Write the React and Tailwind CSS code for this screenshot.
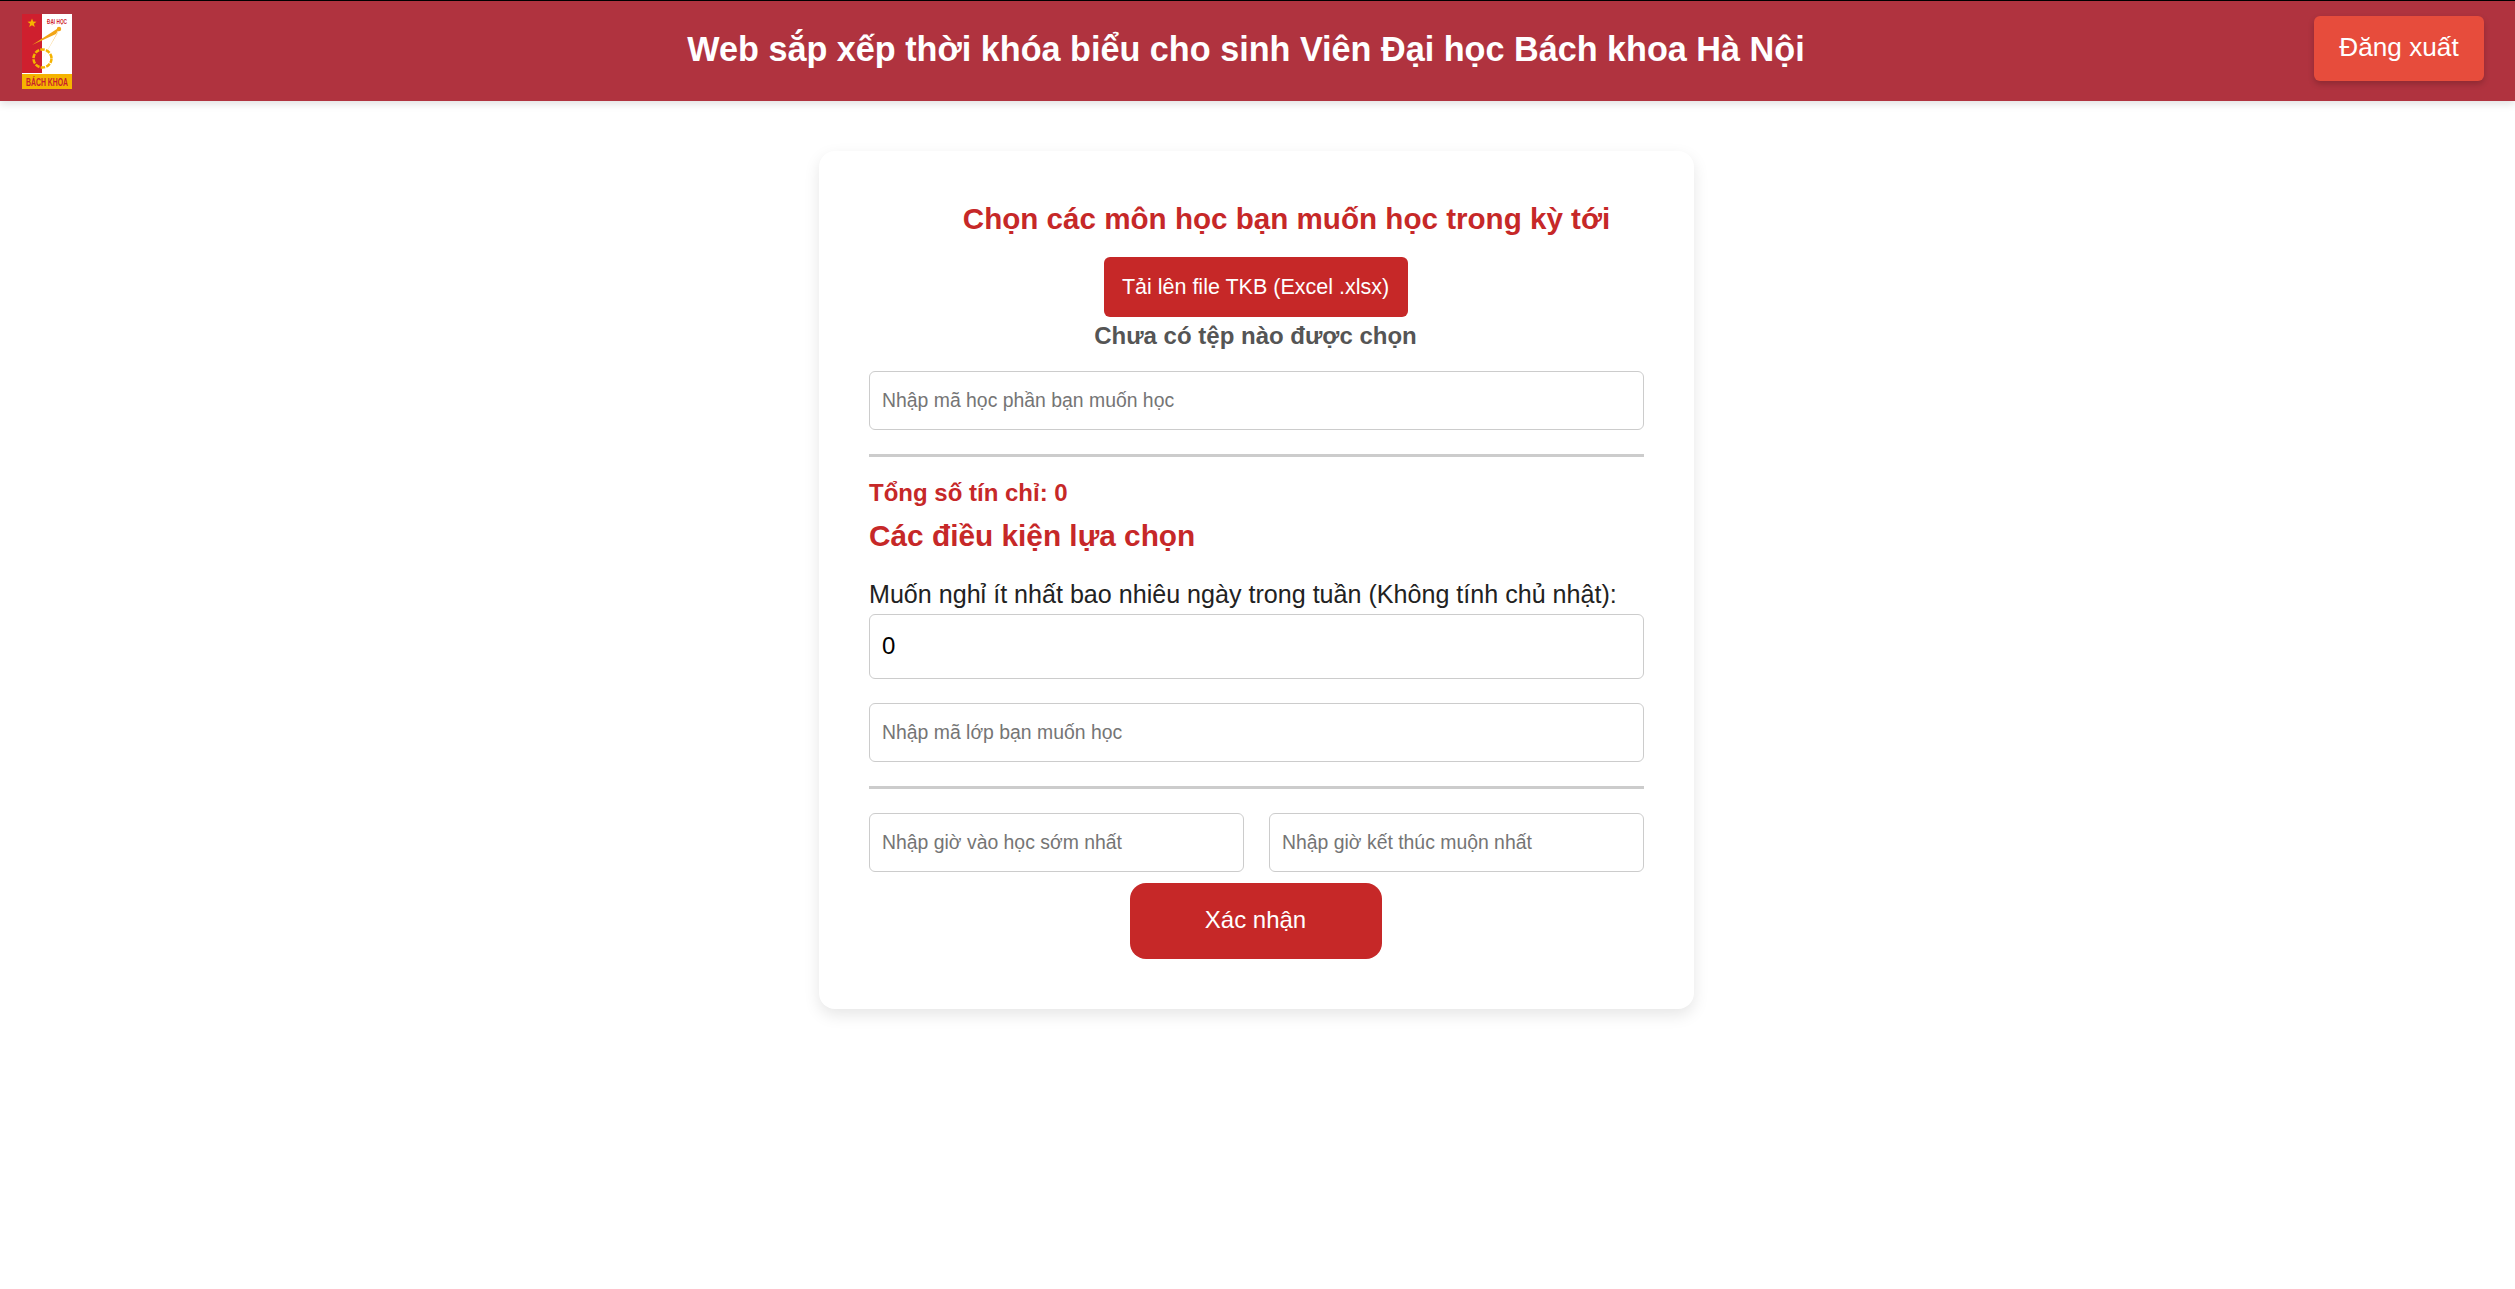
function Logo() {
  return (
    <svg width="50" height="75" viewBox="0 0 50 75" className="shrink-0 overflow-visible">
      <rect x="0" y="0" width="50" height="60" fill="#ffffff" />
      <rect x="0" y="0" width="20" height="59" fill="#cf1f2e" />
      <rect x="0" y="60" width="50" height="15" fill="#f5b400" />
      <polygon points="10,4.5 11.2,7.6 14.5,7.7 11.9,9.8 12.8,13 10,11.2 7.2,13 8.1,9.8 5.5,7.7 8.8,7.6" fill="#f5b400" />
      <text transform="translate(25 9.5) scale(1 1.3)" textLength="20" lengthAdjust="spacingAndGlyphs" fontSize="5" fontWeight="700" fill="#cf1f2e" fontFamily="Liberation Sans, sans-serif">ĐẠI HỌC</text>
      <circle cx="20.5" cy="44.5" r="9" fill="none" stroke="#f5b400" strokeWidth="2.5" strokeDasharray="4.5 1.2" />
      <path d="M38 13 L10 31 L34 20 Z" fill="#f2a516" />
      <path d="M38 14 L20 46 L35 20 Z" fill="#f2a516" />
      <circle cx="37" cy="15" r="2.2" fill="#f2a516" />
      <text transform="translate(4 72) scale(1 1.45)" textLength="42" lengthAdjust="spacingAndGlyphs" fontSize="8" fontWeight="700" fill="#c8202c" fontFamily="Liberation Sans, sans-serif">BÁCH KHOA</text>
    </svg>
  );
}

const field = "w-full h-[59px] px-3 rounded-md border border-[#cccccc] bg-white text-[19.4px] text-black outline-none placeholder:text-[#757575]";

export default function App() {
  return (
    <div className="min-h-[1289px] bg-white font-['Liberation_Sans',Arial,sans-serif]">
      <header className="flex h-[101px] items-center border-t border-black bg-[#b0333f] pl-[22px] pr-[31px] shadow-[0_3px_8px_rgba(0,0,0,0.12)]">
        <Logo />
        <h1 className="mb-[2px] flex-1 pl-[106px] text-center text-[34.2px] font-bold text-white">Web sắp xếp thời khóa biểu cho sinh Viên Đại học Bách khoa Hà Nội</h1>
        <button className="mb-[5px] h-[65px] w-[170px] rounded-md bg-[#e74c3c] pb-[2px] text-[26.2px] font-medium text-white shadow-[0_3px_6px_rgba(0,0,0,0.2)]">Đăng xuất</button>
      </header>
      <main className="flex justify-center pr-[2px] pt-[50px]">
        <div className="flex w-[875px] flex-col rounded-2xl bg-white p-[50px] pt-[48px] shadow-[0_6px_16px_rgba(0,0,0,0.1)]">
          <h2 className="pl-[60px] text-center text-[29.6px] font-bold leading-[40px] text-[#c62828]">Chọn các môn học bạn muốn học trong kỳ tới</h2>
          <button className="mx-auto mt-[18px] h-[60px] w-[304px] translate-x-[-1px] rounded-md bg-[#c62828] text-[21.5px] text-white">Tải lên file TKB (Excel .xlsx)</button>
          <p className="pr-[2px] text-center text-[24px] font-bold leading-[38px] text-[#555555]">Chưa có tệp nào được chọn</p>
          <input className={`${field} mt-[16px]`} placeholder="Nhập mã học phần bạn muốn học" />
          <hr className="mt-[24px] border-t-[3px] border-[#cccccc]" />
          <p className="mt-[22px] text-[24px] font-bold leading-[28px] text-[#c62828]">Tổng số tín chỉ: 0</p>
          <h3 className="mt-[10px] text-[29.8px] font-bold leading-[38px] text-[#c62828]">Các điều kiện lựa chọn</h3>
          <label className="mb-[1px] mt-[24px] text-[25.1px] leading-[30px] text-[#222222]">Muốn nghỉ ít nhất bao nhiêu ngày trong tuần (Không tính chủ nhật):</label>
          <input className="mt-[4px] h-[65px] w-full rounded-md border border-[#cccccc] px-3 pb-[2px] text-[24px] text-black outline-none" defaultValue="0" />
          <input className={`${field} mt-[24px]`} placeholder="Nhập mã lớp bạn muốn học" />
          <hr className="mt-[24px] border-t-[3px] border-[#cccccc]" />
          <div className="mt-[24px] flex gap-[25px]">
            <input className={field} placeholder="Nhập giờ vào học sớm nhất" />
            <input className={field} placeholder="Nhập giờ kết thúc muộn nhất" />
          </div>
          <button className="mx-auto mt-[11px] h-[76px] w-[252px] translate-x-[-1px] rounded-2xl bg-[#c62828] pb-[2px] text-[24px] text-white">Xác nhận</button>
        </div>
      </main>
    </div>
  );
}
